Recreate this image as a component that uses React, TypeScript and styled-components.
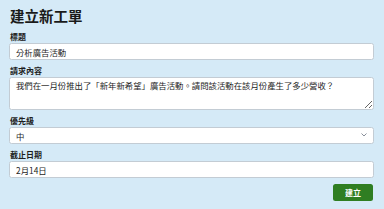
import React from "react";
import styled, { createGlobalStyle } from "styled-components";

const Global = createGlobalStyle`
  * { box-sizing: border-box; }
  html, body { margin: 0; padding: 0; background: #d5eaf7; }
  body { font-family: "Noto Sans CJK TC", "Noto Sans", sans-serif; color: #1c1c1c; }
`;

const Page = styled.form`
  padding: 7px 10px 9px 9px;
  display: flex;
  flex-direction: column;
`;

const Title = styled.h1`
  margin: 0 0 7px 0;
  font-size: 14.5px;
  line-height: 18px;
  font-weight: 700;
  color: #1a1a1a;
  padding-left: 1px;
`;

const Field = styled.div`
  display: flex;
  flex-direction: column;
  margin-bottom: 6px;
`;

const Label = styled.label`
  font-size: 8px;
  line-height: 10px;
  font-weight: 700;
  margin-bottom: 1px;
  padding-left: 1px;
  color: #1e1e1e;
`;

const baseControl = `
  width: 100%;
  border: 1px solid #c3ccd4;
  border-radius: 2.5px;
  background: #ffffff;
  font-family: "Noto Sans CJK TC", "Noto Sans", sans-serif;
  font-size: 8.4px;
  color: #1e1e1e;
  padding: 0 6px;
  outline: none;
  margin: 0;
`;

const Input = styled.input`
  ${baseControl}
  height: 17px;
  line-height: 15px;
`;

const TextArea = styled.textarea`
  ${baseControl}
  height: 33px;
  line-height: 11px;
  padding: 2px 6px;
  resize: vertical;
  display: block;
`;

const SelectWrap = styled.div`
  position: relative;
`;

const Select = styled.select`
  ${baseControl}
  height: 17px;
  appearance: none;
  -webkit-appearance: none;
  display: block;
`;

const Chevron = styled.svg`
  position: absolute;
  right: 7px;
  top: 6px;
  width: 6px;
  height: 4px;
  pointer-events: none;
`;

const Actions = styled.div`
  display: flex;
  justify-content: flex-end;
  padding-right: 1px;
`;

const Button = styled.button`
  width: 40px;
  height: 17px;
  border: none;
  border-radius: 2.5px;
  background: #2f7e22;
  color: #ffffff;
  font-family: "Noto Sans CJK TC", "Noto Sans", sans-serif;
  font-size: 8px;
  font-weight: 700;
  padding: 0;
  cursor: pointer;
`;

export default function App() {
  return (
    <>
      <Global />
      <Page onSubmit={(e) => e.preventDefault()}>
        <Title>建立新工單</Title>
        <Field>
          <Label>標題</Label>
          <Input defaultValue="分析廣告活動" />
        </Field>
        <Field>
          <Label>請求內容</Label>
          <TextArea defaultValue="我們在一月份推出了「新年新希望」廣告活動。請問該活動在該月份產生了多少營收？" />
        </Field>
        <Field>
          <Label>優先級</Label>
          <SelectWrap>
            <Select defaultValue="中">
              <option>低</option>
              <option>中</option>
              <option>高</option>
            </Select>
            <Chevron viewBox="0 0 6 4">
              <path d="M0.5 0.5 L3 3 L5.5 0.5" fill="none" stroke="#6b7280" strokeWidth="0.8" />
            </Chevron>
          </SelectWrap>
        </Field>
        <Field>
          <Label>截止日期</Label>
          <Input defaultValue="2月14日" />
        </Field>
        <Actions>
          <Button type="submit">建立</Button>
        </Actions>
      </Page>
    </>
  );
}
